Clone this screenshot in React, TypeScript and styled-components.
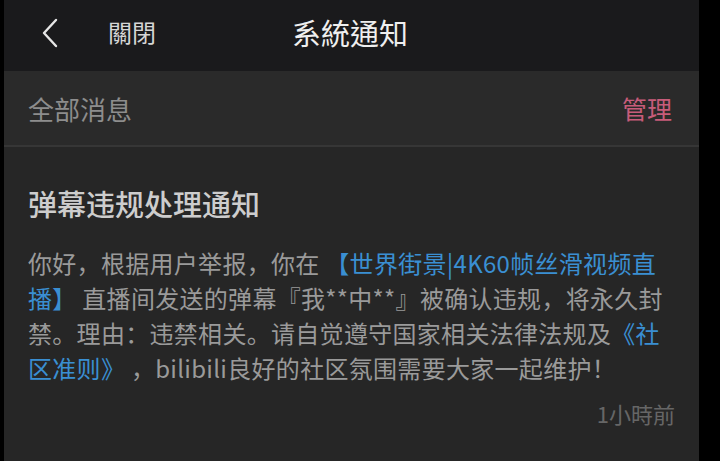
import styled, { createGlobalStyle } from "styled-components";

const GlobalStyle = createGlobalStyle`
  html, body {
    margin: 0;
    padding: 0;
    background: #000000;
  }
  body {
    font-family: "Noto Sans CJK SC", "Noto Sans CJK TC", "Noto Sans", sans-serif;
  }
`;

const Screen = styled.div`
  width: 720px;
  height: 461px;
  background: #000000;
  padding-left: 4px;
  box-sizing: border-box;
  overflow: hidden;
`;

const Panel = styled.div`
  width: 695px;
  height: 461px;
  display: flex;
  flex-direction: column;
  background: #262626;
`;

const Header = styled.header`
  height: 71px;
  flex-shrink: 0;
  background: #1a1a1c;
  display: flex;
  align-items: center;
  position: relative;
`;

const BackButton = styled.div`
  width: 24px;
  height: 30px;
  margin-left: 34px;
  margin-top: -6px;
  display: flex;
  align-items: center;
  justify-content: center;
`;

const CloseLabel = styled.span`
  margin-left: 46px;
  margin-top: -8px;
  font-size: 24px;
  color: #d6d6d6;
  font-family: "Noto Sans CJK TC", "Noto Sans CJK SC", sans-serif;
`;

const Title = styled.h1`
  position: absolute;
  left: 288px;
  top: 11px;
  margin: 0;
  font-size: 29px;
  font-weight: 400;
  color: #efefef;
  font-family: "Noto Sans CJK TC", "Noto Sans CJK SC", sans-serif;
`;

const SubBar = styled.div`
  height: 74px;
  flex-shrink: 0;
  background: #2a2a2a;
  border-bottom: 2px solid #363636;
  display: flex;
  align-items: center;
  justify-content: space-between;
  padding: 0 27px 0 24px;
`;

const SubTitle = styled.span`
  font-size: 26px;
  color: #8d8d8d;
`;

const ManageLink = styled.span`
  font-size: 25px;
  color: #c75c7a;
`;

const Notice = styled.section`
  padding: 36px 24px 0 24px;
  display: flex;
  flex-direction: column;
`;

const NoticeTitle = styled.h2`
  margin: 0 0 22px 0;
  font-size: 29px;
  font-weight: 500;
  color: #cdcdcd;
  line-height: 40px;
`;

const NoticeBody = styled.p`
  margin: 0;
  font-size: 24px;
  line-height: 35px;
  letter-spacing: 0.3px;
  color: #9a9a9a;
`;

const Link = styled.span`
  color: #3a8fd2;
`;

const Time = styled.div`
  align-self: flex-end;
  margin-top: 12px;
  margin-right: 0;
  font-size: 22px;
  color: #666666;
  font-family: "Noto Sans CJK TC", "Noto Sans CJK SC", sans-serif;
`;

const Line = styled.span`
  display: block;
  white-space: nowrap;
`;

export default function App() {
  return (
    <>
      <GlobalStyle />
      <Screen>
        <Panel>
          <Header>
            <BackButton>
              <svg width="20" height="30" viewBox="0 0 20 30" fill="none">
                <polyline
                  points="16,2 4,15 16,28"
                  stroke="#e6e6e6"
                  strokeWidth="2.4"
                  strokeLinecap="round"
                  strokeLinejoin="round"
                />
              </svg>
            </BackButton>
            <CloseLabel>關閉</CloseLabel>
            <Title>系統通知</Title>
          </Header>
          <SubBar>
            <SubTitle>全部消息</SubTitle>
            <ManageLink>管理</ManageLink>
          </SubBar>
          <Notice>
            <NoticeTitle>弹幕违规处理通知</NoticeTitle>
            <NoticeBody>
              <Line>
                你好，根据用户举报，你在 <Link>【世界街景|4K60帧丝滑视频直</Link>
              </Line>
              <Line>
                <Link>播】</Link> 直播间发送的弹幕『我**中**』被确认违规，将永久封
              </Line>
              <Line>
                禁。理由：违禁相关。请自觉遵守国家相关法律法规及<Link>《社</Link>
              </Line>
              <Line>
                <Link>区准则》</Link> ，bilibili良好的社区氛围需要大家一起维护！
              </Line>
            </NoticeBody>
            <Time>1小時前</Time>
          </Notice>
        </Panel>
      </Screen>
    </>
  );
}
